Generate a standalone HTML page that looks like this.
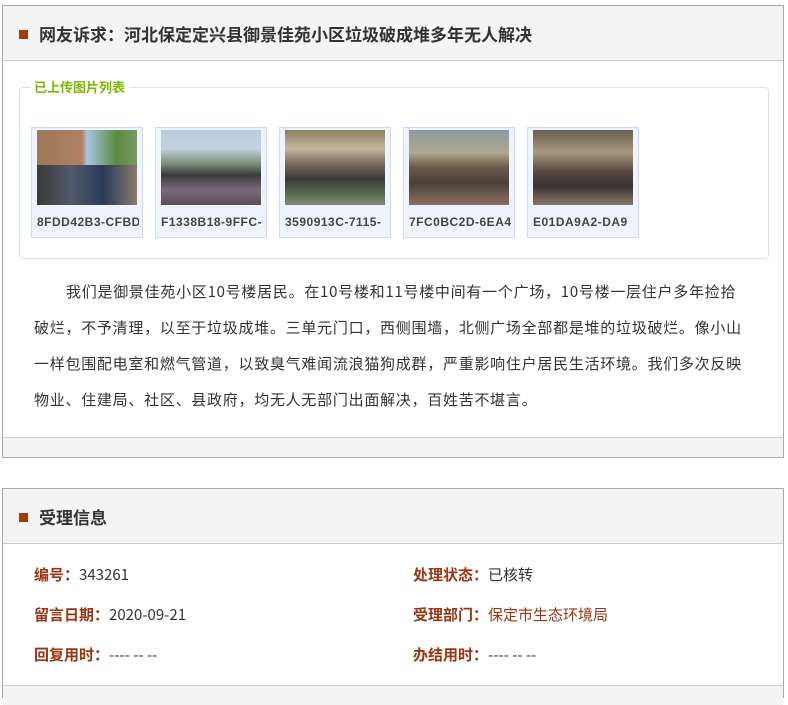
<!DOCTYPE html>
<html><head><meta charset="utf-8"><style>
*{margin:0;padding:0;box-sizing:border-box}
body{width:788px;height:691px;background:#fff;font-family:"Liberation Sans","Microsoft YaHei","Noto Sans CJK SC",sans-serif;overflow:hidden;position:relative;color:#333}
.panel{position:absolute;left:2px;width:782px;border:1px solid #aaa;background:#fff}
.hd{height:55px;background:#f4f4f4;border-bottom:1px solid #ccc;position:relative}
.hd i{position:absolute;left:16px;top:24px;width:9px;height:9px;background:#a33a0a}
.hd b{position:absolute;left:36px;top:15px;font-size:17px;color:#333;font-family:"Noto Sans CJK SC",sans-serif;font-weight:bold}
.fs{position:absolute;left:16px;top:81px;width:750px;height:172px;border:1px solid #d5e3f5;border-radius:4px}
.lg{position:absolute;left:10px;top:-9px;background:#fff;padding:0 4px;font-size:13px;font-weight:bold;color:#7cb900;font-family:"Noto Sans CJK SC",sans-serif;line-height:16px}
.th{position:absolute;top:39px;width:112px;height:111px;border:1px solid #c9dcf2;background:#eef4fd}
.th .im{position:absolute;left:5px;top:2px;width:100px;height:75px}
.th span{position:absolute;left:5px;top:87px;width:102px;overflow:hidden;white-space:nowrap;font-size:12px;font-weight:bold;color:#444;letter-spacing:.5px}
.p{position:absolute;left:31px;top:268px;width:760px;font-size:15px;line-height:36px;color:#333;font-family:"Noto Sans CJK SC",sans-serif;letter-spacing:.73px;white-space:nowrap}
.ft{position:absolute;left:0;bottom:0;width:100%;height:20px;background:#f4f4f4;border-top:1px solid #ccc}
.r{position:absolute;font-size:15px;font-family:"Noto Sans CJK SC",sans-serif;color:#333}
.r b{color:#9b3413}
</style></head><body>
<div class="panel" style="top:5px;height:453px">
 <div class="hd"><i></i><b>网友诉求：河北保定定兴县御景佳苑小区垃圾破成堆多年无人解决</b></div>
 <div class="fs"><div class="lg">已上传图片列表</div>
  <div class="th" style="left:11px"><div class="im" style="background:linear-gradient(90deg,#9a7a5a 0,#b08060 45%,#aac4e0 50%,#5a8a40 80%,#7a9a60);"><div style="position:absolute;left:0;top:35px;width:100px;height:40px;background:linear-gradient(90deg,#3a3a3a,#505a6a,#2a3a5a,#8a7a6a)"></div></div><span>8FDD42B3-CFBD</span></div>
  <div class="th" style="left:135px"><div class="im" style="background:linear-gradient(#b9cde0 0,#c4d2de 25%,#7a8c7a 45%,#3a3a3a 60%,#7a6a7a 80%,#5a4a5a)"></div><span>F1338B18-9FFC-</span></div>
  <div class="th" style="left:259px"><div class="im" style="background:linear-gradient(#8a8060 0,#c4b8a0 25%,#7a6a5a 45%,#3a3a3a 65%,#5a6a4a 85%,#8a8a7a)"></div><span>3590913C-7115-</span></div>
  <div class="th" style="left:383px"><div class="im" style="background:linear-gradient(#8a9aa0 0,#b0a890 30%,#6a5a4a 50%,#4a4038 70%,#8a7060)"></div><span>7FC0BC2D-6EA4</span></div>
  <div class="th" style="left:507px"><div class="im" style="background:linear-gradient(#6a6050 0,#a89880 30%,#5a4a40 55%,#3a3230 75%,#8a7868)"></div><span>E01DA9A2-DA9</span></div>
 </div>
 <div class="p"><span style="padding-left:32px"></span>我们是御景佳苑小区10号楼居民。在10号楼和11号楼中间有一个广场，10号楼一层住户多年捡拾<br>破烂，不予清理，以至于垃圾成堆。三单元门口，西侧围墙，北侧广场全部都是堆的垃圾破烂。像小山<br>一样包围配电室和燃气管道，以致臭气难闻流浪猫狗成群，严重影响住户居民生活环境。我们多次反映<br>物业、住建局、社区、县政府，均无人无部门出面解决，百姓苦不堪言。</div>
 <div class="ft"></div>
</div>
<div class="panel" style="top:488px;height:210px">
 <div class="hd"><i></i><b>受理信息</b></div>
 <div class="r" style="left:31px;top:75px"><b>编号：</b>343261</div>
 <div class="r" style="left:31px;top:115px"><b>留言日期：</b>2020-09-21</div>
 <div class="r" style="left:31px;top:155px"><b>回复用时：</b>---- -- --</div>
 <div class="r" style="left:410px;top:75px"><b>处理状态：</b>已核转</div>
 <div class="r" style="left:410px;top:115px"><b>受理部门：</b><span style="color:#9b3413">保定市生态环境局</span></div>
 <div class="r" style="left:410px;top:155px"><b>办结用时：</b>---- -- --</div>
 <div style="position:absolute;left:0;top:196px;width:100%;height:20px;background:#f4f4f4;border-top:1px solid #ccc"></div>
</div>
</body></html>
